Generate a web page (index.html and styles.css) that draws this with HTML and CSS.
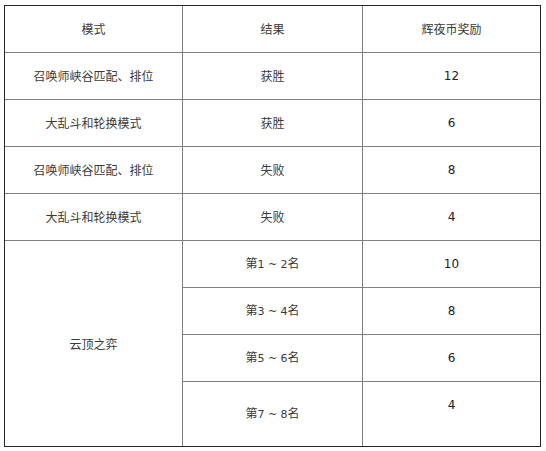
FILE: index.html
```html
<!DOCTYPE html>
<html lang="zh-CN">
<head>
<meta charset="utf-8">
<title>辉夜币奖励</title>
<link rel="stylesheet" href="styles.css">
</head>
<body>
<table class="reward">
  <colgroup>
    <col class="c1"><col class="c2"><col class="c3">
  </colgroup>
  <tr><td>模式</td><td>结果</td><td class="last">辉夜币奖励</td></tr>
  <tr><td>召唤师峡谷匹配、排位</td><td>获胜</td><td class="last num">12</td></tr>
  <tr><td>大乱斗和轮换模式</td><td>获胜</td><td class="last num">6</td></tr>
  <tr><td>召唤师峡谷匹配、排位</td><td>失败</td><td class="last num">8</td></tr>
  <tr><td>大乱斗和轮换模式</td><td>失败</td><td class="last num">4</td></tr>
  <tr><td rowspan="4" class="bottom">云顶之弈</td><td>第<span class="num">1 ~ 2</span>名</td><td class="last num">10</td></tr>
  <tr><td>第<span class="num">3 ~ 4</span>名</td><td class="last num">8</td></tr>
  <tr><td>第<span class="num">5 ~ 6</span>名</td><td class="last num">6</td></tr>
  <tr class="end"><td class="bottom">第<span class="num">7 ~ 8</span>名</td><td class="last bottom num">4<br>&nbsp;</td></tr>
</table>
</body>
</html>
```
FILE: styles.css
```css
html, body {
  margin: 0;
  padding: 0;
  background: #ffffff;
}
body {
  padding: 5px 0 0 4px;
}
.reward {
  border-collapse: separate;
  border-spacing: 0;
  border: 1px solid #262626;
  width: 537px;
  table-layout: fixed;
  font-family: "Noto Sans CJK SC", "Microsoft YaHei", sans-serif;
  font-size: 12px;
  line-height: 18px;
  color: #3a3a3a;
}
.c1 { width: 178px; }
.c2 { width: 180px; }
.c3 { width: 177px; }
.reward td {
  box-sizing: border-box;
  height: 47px;
  padding: 0;
  text-align: center;
  vertical-align: middle;
  border-right: 1px solid #808080;
  border-bottom: 1px solid #808080;
}
.reward td.last {
  border-right: none;
}
.reward td.bottom {
  border-bottom: none;
}
.reward tr.end td {
  height: 64px;
}
.num {
  font-family: "DejaVu Sans", Verdana, sans-serif;
  color: #222222;
  letter-spacing: 0;
}
td .num {
  color: #3a3a3a;
  font-size: 11px;
}
```
